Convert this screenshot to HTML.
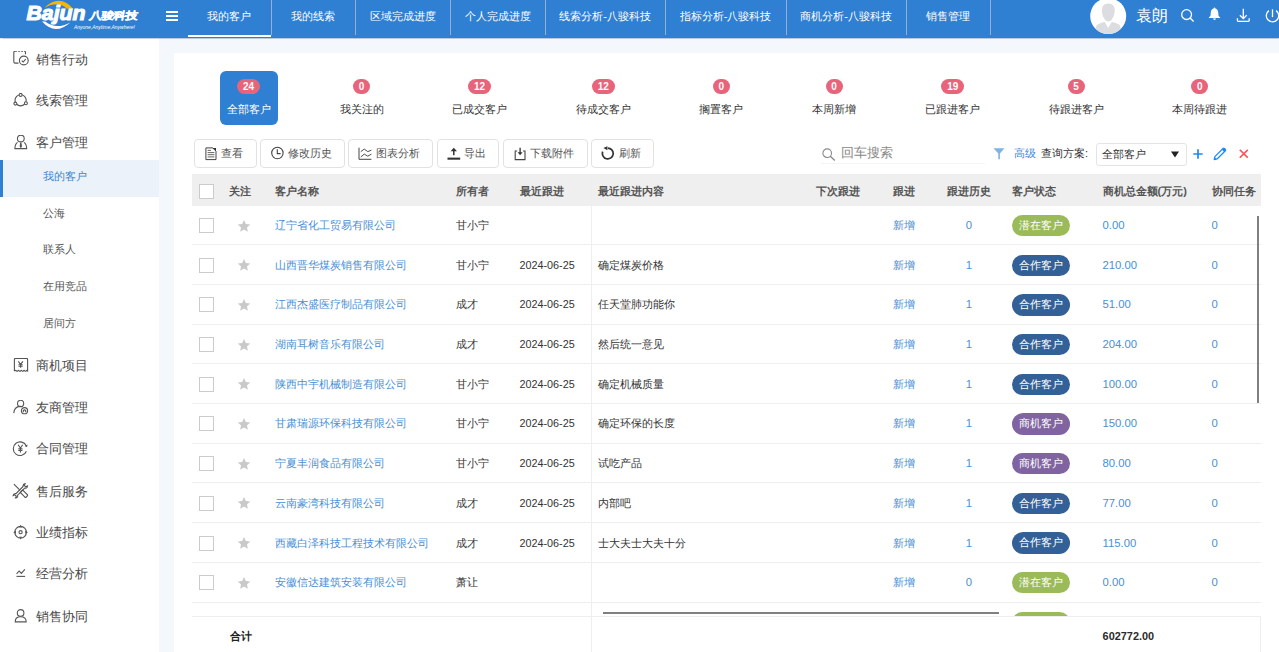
<!DOCTYPE html><html><head><meta charset="utf-8"><style>
*{box-sizing:border-box;margin:0;padding:0}
html,body{width:1279px;height:652px;overflow:hidden}
body{position:relative;background:#f4f7fb;font-family:"Liberation Sans",sans-serif;color:#333;font-size:11px}
.A{position:absolute;white-space:nowrap}
#hdr{position:absolute;left:0;top:0;width:1279px;height:38px;background:#2f80d3;box-shadow:0 0.5px 1px rgba(0,60,140,.25);z-index:5}
.nav{position:absolute;top:0;height:36px;line-height:32px;text-align:center;color:#fff;font-size:11px}
.sep{position:absolute;top:0;width:1px;height:35px;background:#94b0cc}
#side{position:absolute;left:0;top:38px;width:159px;height:614px;background:#fff}
.mi{position:absolute;left:35.6px;height:20px;line-height:20px;font-size:12.8px;color:#4a4a4a;white-space:nowrap}
.si{position:absolute;left:42.6px;height:20px;line-height:20px;font-size:11.2px;color:#555;white-space:nowrap}
#card{position:absolute;left:174px;top:53px;width:1120px;height:620px;background:#fff}
.tl{position:absolute;height:16px;line-height:16px;font-size:11px;color:#333;white-space:nowrap;text-align:center}
.badge{position:absolute;top:79px;height:15px;line-height:15px;border-radius:8px;background:#e8647a;color:#fff;font-weight:bold;font-size:10px;text-align:center;font-family:"Liberation Sans",sans-serif}
.btn{position:absolute;top:139px;height:28.5px;border:1px solid #e2e2e2;border-radius:4px;background:#fff}
.bt{position:absolute;top:144px;height:18px;line-height:18px;color:#555;font-size:11px;white-space:nowrap}
.th{position:absolute;top:181.5px;height:18px;line-height:18px;font-weight:bold;font-size:11px;color:#555;white-space:nowrap}
.cb{position:absolute;width:15px;height:15px;border:1px solid #cbcbcb;border-radius:0;background:#fff}
.rl{position:absolute;left:192px;width:1069px;height:1px;background:#eeeeee}
.td{position:absolute;height:18px;line-height:18px;font-size:11px;color:#333;white-space:nowrap}
.lk{color:#4a8fd6}
.pill{position:absolute;left:1012px;width:58px;height:21.5px;line-height:21.5px;border-radius:11px;color:#fff;font-size:11.2px;text-indent:-1px;text-align:center;white-space:nowrap}
.g{background:#9bbb59}.b{background:#336096}.p{background:#8064a2}
</style></head><body>
<div id="hdr">
<svg class="A" style="left:0;top:0" width="150" height="36" viewBox="0 0 150 36"><path d="M44.4 7.7 Q59.5 -7 73.5 9 L66.5 8.4 Q58.5 0.5 44.4 7.7Z" fill="#f7b500"/><path d="M42 21.6 Q55 36 70.4 22.4 Q56 30 45.2 21.6Z" fill="#fff"/><text x="26.5" y="20" font-family="Liberation Sans" font-weight="bold" font-style="italic" font-size="20" fill="#fff" stroke="#fff" stroke-width="1.1" textLength="59" lengthAdjust="spacingAndGlyphs">Bajun</text><text transform="translate(88.6,19.1) skewX(-10)" x="0" y="0" font-weight="bold" font-size="10.2" fill="#fff" stroke="#fff" stroke-width="0.3" textLength="48.5" lengthAdjust="spacingAndGlyphs">八骏科技</text><text x="74" y="28.6" font-family="Liberation Sans" font-style="italic" font-size="4.8" fill="#fff" textLength="61" lengthAdjust="spacingAndGlyphs">Anyone,Anytime,Anywhere!</text></svg>
<div class="A" style="left:166px;top:11px;width:11.6px;height:1.7px;background:#fff"></div>
<div class="A" style="left:166px;top:15.2px;width:11.6px;height:1.7px;background:#fff"></div>
<div class="A" style="left:166px;top:19.4px;width:11.6px;height:1.7px;background:#fff"></div>
<div class="nav" style="left:187px;width:84px">我的客户</div>
<div class="sep" style="left:271px"></div>
<div class="nav" style="left:271px;width:84px">我的线索</div>
<div class="sep" style="left:355px"></div>
<div class="nav" style="left:355px;width:95px">区域完成进度</div>
<div class="sep" style="left:450px"></div>
<div class="nav" style="left:450px;width:95px">个人完成进度</div>
<div class="sep" style="left:545px"></div>
<div class="nav" style="left:545px;width:120px">线索分析-八骏科技</div>
<div class="sep" style="left:665px"></div>
<div class="nav" style="left:665px;width:121px">指标分析-八骏科技</div>
<div class="sep" style="left:786px"></div>
<div class="nav" style="left:786px;width:120px">商机分析-八骏科技</div>
<div class="sep" style="left:906px"></div>
<div class="nav" style="left:906px;width:84px">销售管理</div>
<div class="sep" style="left:990px"></div>
<div class="A" style="left:188px;top:34.5px;width:83px;height:2px;background:#fff"></div>
<svg class="A" style="left:1090px;top:-2.4px" width="37" height="37" viewBox="0 0 37 37"><defs><clipPath id="cc"><circle cx="18.2" cy="18.1" r="18"/></clipPath></defs><circle cx="18.2" cy="18.1" r="18" fill="#fff"/><g clip-path="url(#cc)" fill="#dcdde1"><path d="M18.3 5.5 C23 5.5 24.7 8.5 24.7 12.5 C24.7 18 21.5 23.6 18.3 23.6 C15 23.6 11.9 18 11.9 12.5 C11.9 8.5 13.6 5.5 18.3 5.5Z"/><path d="M4 38 L6.5 27.5 Q9 25 14.8 24 L18.2 30 L21.8 24 Q27.5 25 30 27.5 L32.5 38Z"/></g></svg>
<div class="A" style="left:1136px;top:6px;font-size:15.5px;line-height:20px;color:#fff">袁朗</div>
<svg class="A" style="left:1180px;top:9px" width="15" height="14" viewBox="0 0 15 14"><circle cx="6.6" cy="5.6" r="4.9" fill="none" stroke="#fff" stroke-width="1.3"/><path d="M10.1 9.1 L13.6 12.6" stroke="#fff" stroke-width="1.4"/></svg>
<svg class="A" style="left:1208px;top:7px" width="13" height="14" viewBox="0 0 13 14"><path d="M6.5 0.6 Q7.2 0.6 7.3 1.5 Q10.2 2.3 10.3 6.2 L10.5 8.8 Q10.8 9.5 12.2 10.2 Q12.4 10.9 11.6 10.9 L1.4 10.9 Q0.6 10.9 0.8 10.2 Q2.2 9.5 2.5 8.8 L2.7 6.2 Q2.8 2.3 5.7 1.5 Q5.8 0.6 6.5 0.6Z" fill="#fff"/><path d="M5 11.6 H8 Q7.8 13 6.5 13 Q5.2 13 5 11.6Z" fill="#fff"/></svg>
<svg class="A" style="left:1236px;top:8px" width="15" height="15" viewBox="0 0 15 15"><path d="M7.3 0.8 V10.6 M3.9 7.2 L7.3 10.6 L10.7 7.2" fill="none" stroke="#fff" stroke-width="1.3"/><path d="M1.4 10.2 V12.6 Q1.4 13.4 2.2 13.4 H12.4 Q13.2 13.4 13.2 12.6 V10.2" fill="none" stroke="#fff" stroke-width="1.3"/></svg>
<svg class="A" style="left:1264px;top:8px" width="16" height="15" viewBox="0 0 16 15"><path d="M4.9 2.6 A6.2 6.2 0 1 0 12.1 2.6" fill="none" stroke="#fff" stroke-width="1.3"/><path d="M8.5 1.3 V9.1" stroke="#fff" stroke-width="1.3"/></svg>
</div>
<div id="side"></div>
<div class="mi" style="top:49.7px">销售行动</div>
<div class="mi" style="top:91.4px">线索管理</div>
<div class="mi" style="top:133.1px">客户管理</div>
<div class="mi" style="top:356.2px">商机项目</div>
<div class="mi" style="top:398.1px">友商管理</div>
<div class="mi" style="top:439.4px">合同管理</div>
<div class="mi" style="top:481.6px">售后服务</div>
<div class="mi" style="top:523.0px">业绩指标</div>
<div class="mi" style="top:564.4px">经营分析</div>
<div class="mi" style="top:606.9px">销售协同</div>
<div class="A" style="left:0;top:160px;width:159px;height:37px;background:#ebf2fa"></div>
<div class="A" style="left:0;top:160px;width:3px;height:37px;background:#2f80d3"></div>
<div class="si" style="color:#3a85d0;top:166.4px">我的客户</div>
<div class="si" style="top:203.3px">公海</div>
<div class="si" style="top:238.9px">联系人</div>
<div class="si" style="top:275.7px">在用竞品</div>
<div class="si" style="top:312.5px">居间方</div>
<svg class="A" style="left:12px;top:51.3px" width="17" height="16" viewBox="0 0 16 16"><path d="M6 12.1 H2.6 Q1.3 12.1 1.3 10.8 V1.6 Q1.3 0.3 2.6 0.3 H11.7 Q13 0.3 13 1.6 V3.3" stroke="#555" stroke-width="1.1" fill="none" stroke-dasharray="18.3 1 2 1 2 1 40"/><circle cx="11.3" cy="9.5" r="4.4" stroke="#555" stroke-width="1.1" fill="none"/><path d="M9.2 9.6 L10.7 11 L13.2 8.2" stroke="#555" stroke-width="1.1" fill="none"/></svg>
<svg class="A" style="left:12px;top:93.0px" width="17" height="16" viewBox="0 0 16 16"><circle cx="8.1" cy="7.3" r="5.6" stroke="#555" stroke-width="1.1" fill="none"/><circle cx="8.1" cy="1.9" r="1.5" fill="#fff" stroke="#555" stroke-width="1.1" fill="none"/><circle cx="2.9" cy="10.6" r="1.5" fill="#fff" stroke="#555" stroke-width="1.1" fill="none"/><circle cx="13.4" cy="10.3" r="1.5" fill="#fff" stroke="#555" stroke-width="1.1" fill="none"/></svg>
<svg class="A" style="left:12px;top:134.7px" width="17" height="16" viewBox="0 0 16 16"><circle cx="8.3" cy="3.5" r="3.4" stroke="#555" stroke-width="1.1" fill="none"/><path d="M5 7.4 Q2.5 9 2.4 13.6 H14.2 Q14 9 11.6 7.4" stroke="#555" stroke-width="1.1" fill="none"/><path d="M8.3 7.6 L7.7 11.2 L8.3 12.2 L8.9 11.2Z" fill="#555" stroke="#555" stroke-width="1.1" fill="none" stroke-width="0.6"/></svg>
<svg class="A" style="left:12px;top:357.8px" width="17" height="16" viewBox="0 0 16 16"><path d="M1.9 12.8 V1.5 Q1.9 0.4 3 0.4 H14 Q15.1 0.4 15.1 1.5 V12.8 Q14.4 12 13.7 12.8 Q13 13.7 12.3 12.8 Q11.6 12 10.9 12.8 Q10.2 13.7 9.5 12.8 Q8.8 12 8.1 12.8 Q7.4 13.7 6.7 12.8 Q6 12 5.3 12.8 Q4.6 13.7 3.9 12.8 Q3.2 12 2.5 12.8Z" stroke="#555" stroke-width="1.1" fill="none"/><path d="M5.8 3.3 L8.1 6.3 L10.4 3.3 M8.1 6.3 V9.8 M6 6.8 H10.2 M6 8.3 H10.2" stroke="#555" stroke-width="1.1" fill="none" stroke-width="1.2"/></svg>
<svg class="A" style="left:12px;top:399.7px" width="17" height="16" viewBox="0 0 16 16"><circle cx="8.1" cy="3.4" r="3.1" stroke="#555" stroke-width="1.1" fill="none"/><path d="M1.3 13.1 Q1.8 6.6 7.5 6.4 Q9.5 6.4 10.3 6.8" stroke="#555" stroke-width="1.1" fill="none"/><circle cx="12" cy="10.7" r="3.1" stroke="#555" stroke-width="1.1" fill="none"/><path d="M10.8 12.3 V10.6 Q12 9.2 13.2 10.6 V12.3" stroke="#555" stroke-width="1.1" fill="none" stroke-width="0.8"/></svg>
<svg class="A" style="left:12px;top:441.0px" width="17" height="16" viewBox="0 0 16 16"><path d="M13.9 5.2 A6.8 6.8 0 1 0 13.9 10.2" stroke="#555" stroke-width="1.1" fill="none"/><path d="M12.3 5 L14.6 6.2 L15 3.6Z" fill="#555"/><path d="M5.6 3.8 L7.9 7 L10.2 3.8 M7.9 7 V11.6 M5.8 7.8 H10 M5.8 9.4 H10" stroke="#555" stroke-width="1.1" fill="none" stroke-width="1.2"/></svg>
<svg class="A" style="left:12px;top:483.2px" width="17" height="16" viewBox="0 0 16 16"><path d="M1.4 1.2 L7.6 7.4" stroke="#555" stroke-width="1.1" fill="none" stroke-width="1.3"/><path d="M9 8.2 L10.2 7 L15 11.8 Q15.3 12.4 14.8 13 L13.6 14.2 Q13 14.6 12.4 14.2 L7.8 9.4Z" stroke="#555" stroke-width="1.1" fill="none" stroke-width="0.9"/><path d="M10.6 3.5 Q10.2 1 12.6 0.6 L11.8 2.4 L13.2 3.8 L15 3 Q14.8 5.6 12.2 5.1 L5.1 12.2 Q5.6 14.8 3 15 L3.8 13.2 L2.4 11.8 L0.6 12.6 Q1 10.2 3.5 10.6Z" stroke="#555" stroke-width="1.1" fill="none" stroke-width="0.9"/></svg>
<svg class="A" style="left:12px;top:524.6px" width="17" height="16" viewBox="0 0 16 16"><circle cx="8.1" cy="7.2" r="5.8" stroke="#555" stroke-width="1.1" fill="none" stroke-width="1.3"/><circle cx="8.1" cy="7.2" r="1.6" stroke="#555" stroke-width="1.1" fill="none" stroke-width="1.3"/><path d="M8.1 -0.2 L9.6 2.6 H6.6Z M8.1 14.6 L9.6 11.8 H6.6Z M0.7 7.2 L3.5 5.7 V8.7Z M15.5 7.2 L12.7 5.7 V8.7Z" fill="#555"/></svg>
<svg class="A" style="left:12px;top:566.0px" width="17" height="16" viewBox="0 0 16 16"><path d="M4.1 7.8 L6.6 5 L8.8 7.4 L12.4 3.4" stroke="#555" stroke-width="1.1" fill="none" stroke-width="1.2"/><path d="M4 10.4 H12.6" stroke="#555" stroke-width="1.1" fill="none" stroke-width="1.4"/></svg>
<svg class="A" style="left:12px;top:608.5px" width="17" height="16" viewBox="0 0 16 16"><circle cx="8.1" cy="3.9" r="3.3" stroke="#555" stroke-width="1.1" fill="none"/><path d="M2.7 12.9 Q2.7 7.7 8.1 7.7 Q13.7 7.7 13.7 12.9 Z" stroke="#555" stroke-width="1.1" fill="none"/></svg>
<div id="card"></div>
<div class="A" style="left:220px;top:71px;width:58px;height:54px;background:#2f80d3;border-radius:6px"></div>
<div class="tl" style="color:#fff;left:208.5px;width:80px;top:101px">全部客户</div>
<div class="badge" style="left:237.0px;width:23px">24</div>
<div class="tl" style="left:321.6px;width:80px;top:101px">我关注的</div>
<div class="badge" style="left:353.1px;width:17px">0</div>
<div class="tl" style="left:439.6px;width:80px;top:101px">已成交客户</div>
<div class="badge" style="left:468.1px;width:23px">12</div>
<div class="tl" style="left:563.2px;width:80px;top:101px">待成交客户</div>
<div class="badge" style="left:591.7px;width:23px">12</div>
<div class="tl" style="left:681.4px;width:80px;top:101px">搁置客户</div>
<div class="badge" style="left:712.9px;width:17px">0</div>
<div class="tl" style="left:794.0px;width:80px;top:101px">本周新增</div>
<div class="badge" style="left:825.5px;width:17px">0</div>
<div class="tl" style="left:912.7px;width:80px;top:101px">已跟进客户</div>
<div class="badge" style="left:941.2px;width:23px">19</div>
<div class="tl" style="left:1036.0px;width:80px;top:101px">待跟进客户</div>
<div class="badge" style="left:1067.5px;width:17px">5</div>
<div class="tl" style="left:1159.7px;width:80px;top:101px">本周待跟进</div>
<div class="badge" style="left:1191.2px;width:17px">0</div>
<div class="btn" style="left:194px;width:63px"></div>
<div class="btn" style="left:260px;width:85px"></div>
<div class="btn" style="left:348px;width:85px"></div>
<div class="btn" style="left:436.5px;width:62.5px"></div>
<div class="btn" style="left:503px;width:85px"></div>
<div class="btn" style="left:591px;width:63px"></div>
<div class="bt" style="left:221.0px">查看</div>
<div class="bt" style="left:287.7px">修改历史</div>
<div class="bt" style="left:375.5px">图表分析</div>
<div class="bt" style="left:464.1px">导出</div>
<div class="bt" style="left:530.1px">下载附件</div>
<div class="bt" style="left:618.5px">刷新</div>
<svg class="A" style="left:205px;top:146.5px" width="12" height="14" viewBox="0 0 12 14"><path d="M0.9 0.9 H7.8 L11 4.1 V12.6 H0.9Z" fill="none" stroke="#444" stroke-width="1"/><path d="M7.6 0.9 L11 4.3 V0.9Z" fill="#333"/><path d="M2.6 3.4 H6 M2.6 5.6 H9.4 M2.6 7.7 H9.4 M2.6 9.9 H9.4" stroke="#555" stroke-width="0.9"/></svg>
<svg class="A" style="left:269.5px;top:146px" width="15" height="15" viewBox="0 0 15 15"><circle cx="7.4" cy="7" r="5.7" fill="none" stroke="#444" stroke-width="1.1"/><path d="M7.3 3.2 V7.6 H10.6" fill="none" stroke="#444" stroke-width="1.1"/></svg>
<svg class="A" style="left:358px;top:146.5px" width="14" height="14" viewBox="0 0 14 14"><path d="M1 0.7 V12.3 H13.4" fill="none" stroke="#444" stroke-width="1"/><path d="M2.8 4.6 L6.3 2.1 L9.8 4.6 L13.4 3.2 M2.8 9.9 L6.3 7.1 L9.8 9.2 L13.4 7.1" fill="none" stroke="#444" stroke-width="0.95"/></svg>
<svg class="A" style="left:446.5px;top:146.5px" width="14" height="14" viewBox="0 0 14 14"><path d="M6.8 0.7 L10 4.2 H3.6Z" fill="#333"/><rect x="6.05" y="4" width="1.5" height="4.2" fill="#333"/><rect x="0.5" y="10.6" width="12.7" height="2.1" fill="#333"/></svg>
<svg class="A" style="left:513.5px;top:146.5px" width="13" height="14" viewBox="0 0 13 14"><path d="M3.2 4 H1.2 V12.6 H11 V4 H9" fill="none" stroke="#444" stroke-width="1.1"/><path d="M6.1 0.8 V6.5" stroke="#333" stroke-width="1.3"/><path d="M3.6 5.2 H8.6 L6.1 8.2Z" fill="#333"/></svg>
<svg class="A" style="left:601px;top:146px" width="14" height="15" viewBox="0 0 14 15"><path d="M1.73 5.65 A5.4 5.4 0 1 0 6.8 2.1" fill="none" stroke="#333" stroke-width="1.7"/><path d="M2.4 2.1 L6.4 0.2 L6.4 4.2Z" fill="#333"/></svg>
<svg class="A" style="left:821.5px;top:147.5px" width="14" height="13" viewBox="0 0 14 13"><circle cx="5.2" cy="5.2" r="4.3" fill="none" stroke="#888" stroke-width="1.1"/><path d="M8.3 8.3 L12.8 12.5" stroke="#888" stroke-width="1.3"/></svg>
<div class="A" style="left:841px;top:144px;font-size:12.5px;line-height:18px;color:#888">回车搜索</div>
<div class="A" style="left:821px;top:163px;width:164px;height:1px;background:#f4f5f7"></div>
<svg class="A" style="left:992.5px;top:148px" width="12" height="12" viewBox="0 0 12 12"><path d="M0.5 0.3 H11.5 L6.9 5.5 V11.2 H5.3 V5.5Z" fill="#7fb2e5"/></svg>
<div class="A" style="left:1014px;top:144px;font-size:11px;line-height:18px;color:#3f88d4">高级</div>
<div class="A" style="left:1041px;top:144px;font-size:11px;line-height:18px;color:#333">查询方案:</div>
<div class="A" style="left:1095.5px;top:143px;width:91px;height:22.5px;border:1px solid #e4e4e4;border-radius:3px;background:#fff"></div>
<div class="A" style="left:1102px;top:145px;font-size:11px;line-height:18px;color:#333">全部客户</div>
<svg class="A" style="left:1170.5px;top:150.5px" width="8" height="7" viewBox="0 0 8 7"><path d="M0 0.5 H8 L4 6.5Z" fill="#222"/></svg>
<svg class="A" style="left:1192.5px;top:148.5px" width="10" height="10" viewBox="0 0 10 10"><path d="M5 0.3 V9.7 M0.3 5 H9.7" stroke="#1a8af5" stroke-width="1.7"/></svg>
<svg class="A" style="left:1213px;top:147px" width="14" height="14" viewBox="0 0 14 14"><path d="M1.2 12.6 L1.84 9.7 L10.32 1.22 L12.58 3.48 L4.1 11.96Z" fill="none" stroke="#1a8af5" stroke-width="1.2" stroke-linejoin="round"/><path d="M8.9 2.6 L10.5 1 Q11.2 0.4 11.9 1 L12.9 2 Q13.5 2.7 12.9 3.4 L11.2 4.9Z" fill="#1a8af5"/><path d="M1.2 12.6 L1.7 10.3 L3.5 12.1Z" fill="#1a8af5"/></svg>
<svg class="A" style="left:1238.5px;top:149px" width="9.5" height="9.5" viewBox="0 0 10 10"><path d="M0.8 0.8 L9.2 9.2 M9.2 0.8 L0.8 9.2" stroke="#fa5555" stroke-width="1.7"/></svg>
<div class="A" style="left:192px;top:174px;width:1069px;height:32px;background:#efefef"></div>
<div class="cb" style="left:199px;top:184px"></div>
<div class="th" style="left:229.2px">关注</div>
<div class="th" style="left:274.5px">客户名称</div>
<div class="th" style="left:456.2px">所有者</div>
<div class="th" style="left:519.5px">最近跟进</div>
<div class="th" style="left:598.1px">最近跟进内容</div>
<div class="th" style="left:815.9px">下次跟进</div>
<div class="th" style="left:893.3px">跟进</div>
<div class="th" style="left:946.8px">跟进历史</div>
<div class="th" style="left:1011.8px">客户状态</div>
<div class="th" style="left:1102.5px">商机总金额(万元)</div>
<div class="th" style="left:1211.5px">协同任务</div>
<div class="rl" style="top:244.47px"></div>
<div class="cb" style="left:199px;top:218.14px"></div>
<svg class="A" style="left:237px;top:218.64px" width="14" height="14" viewBox="0 0 24 24"><path d="M12 1.5 L15.1 8.6 L22.8 9.3 L17 14.4 L18.7 22 L12 18 L5.3 22 L7 14.4 L1.2 9.3 L8.9 8.6Z" fill="#c9c9c9"/></svg>
<div class="td lk" style="left:274.5px;top:216.14px">辽宁省化工贸易有限公司</div>
<div class="td" style="left:456.2px;top:216.14px">甘小宁</div>
<div class="td lk" style="left:893.3px;top:216.14px">新增</div>
<div class="td lk" style="left:949px;width:40px;text-align:center;top:216.14px;font-size:11.3px">0</div>
<div class="pill g" style="top:214.84px">潜在客户</div>
<div class="td lk" style="left:1102.5px;top:216.14px;font-size:11.3px">0.00</div>
<div class="td lk" style="left:1211.5px;top:216.14px;font-size:11.3px">0</div>
<div class="rl" style="top:284.14px"></div>
<div class="cb" style="left:199px;top:257.81px"></div>
<svg class="A" style="left:237px;top:258.31px" width="14" height="14" viewBox="0 0 24 24"><path d="M12 1.5 L15.1 8.6 L22.8 9.3 L17 14.4 L18.7 22 L12 18 L5.3 22 L7 14.4 L1.2 9.3 L8.9 8.6Z" fill="#c9c9c9"/></svg>
<div class="td lk" style="left:274.5px;top:255.81px">山西晋华煤炭销售有限公司</div>
<div class="td" style="left:456.2px;top:255.81px">甘小宁</div>
<div class="td" style="left:519.5px;top:255.81px;font-size:10.8px">2024-06-25</div>
<div class="td" style="left:598.1px;top:255.81px">确定煤炭价格</div>
<div class="td lk" style="left:893.3px;top:255.81px">新增</div>
<div class="td lk" style="left:949px;width:40px;text-align:center;top:255.81px;font-size:11.3px">1</div>
<div class="pill b" style="top:254.50px">合作客户</div>
<div class="td lk" style="left:1102.5px;top:255.81px;font-size:11.3px">210.00</div>
<div class="td lk" style="left:1211.5px;top:255.81px;font-size:11.3px">0</div>
<div class="rl" style="top:323.81px"></div>
<div class="cb" style="left:199px;top:297.47px"></div>
<svg class="A" style="left:237px;top:297.97px" width="14" height="14" viewBox="0 0 24 24"><path d="M12 1.5 L15.1 8.6 L22.8 9.3 L17 14.4 L18.7 22 L12 18 L5.3 22 L7 14.4 L1.2 9.3 L8.9 8.6Z" fill="#c9c9c9"/></svg>
<div class="td lk" style="left:274.5px;top:295.47px">江西杰盛医疗制品有限公司</div>
<div class="td" style="left:456.2px;top:295.47px">成才</div>
<div class="td" style="left:519.5px;top:295.47px;font-size:10.8px">2024-06-25</div>
<div class="td" style="left:598.1px;top:295.47px">任天堂肺功能你</div>
<div class="td lk" style="left:893.3px;top:295.47px">新增</div>
<div class="td lk" style="left:949px;width:40px;text-align:center;top:295.47px;font-size:11.3px">1</div>
<div class="pill b" style="top:294.17px">合作客户</div>
<div class="td lk" style="left:1102.5px;top:295.47px;font-size:11.3px">51.00</div>
<div class="td lk" style="left:1211.5px;top:295.47px;font-size:11.3px">0</div>
<div class="rl" style="top:363.48px"></div>
<div class="cb" style="left:199px;top:337.14px"></div>
<svg class="A" style="left:237px;top:337.64px" width="14" height="14" viewBox="0 0 24 24"><path d="M12 1.5 L15.1 8.6 L22.8 9.3 L17 14.4 L18.7 22 L12 18 L5.3 22 L7 14.4 L1.2 9.3 L8.9 8.6Z" fill="#c9c9c9"/></svg>
<div class="td lk" style="left:274.5px;top:335.14px">湖南耳树音乐有限公司</div>
<div class="td" style="left:456.2px;top:335.14px">成才</div>
<div class="td" style="left:519.5px;top:335.14px;font-size:10.8px">2024-06-25</div>
<div class="td" style="left:598.1px;top:335.14px">然后统一意见</div>
<div class="td lk" style="left:893.3px;top:335.14px">新增</div>
<div class="td lk" style="left:949px;width:40px;text-align:center;top:335.14px;font-size:11.3px">1</div>
<div class="pill b" style="top:333.84px">合作客户</div>
<div class="td lk" style="left:1102.5px;top:335.14px;font-size:11.3px">204.00</div>
<div class="td lk" style="left:1211.5px;top:335.14px;font-size:11.3px">0</div>
<div class="rl" style="top:403.15px"></div>
<div class="cb" style="left:199px;top:376.81px"></div>
<svg class="A" style="left:237px;top:377.31px" width="14" height="14" viewBox="0 0 24 24"><path d="M12 1.5 L15.1 8.6 L22.8 9.3 L17 14.4 L18.7 22 L12 18 L5.3 22 L7 14.4 L1.2 9.3 L8.9 8.6Z" fill="#c9c9c9"/></svg>
<div class="td lk" style="left:274.5px;top:374.81px">陕西中宇机械制造有限公司</div>
<div class="td" style="left:456.2px;top:374.81px">甘小宁</div>
<div class="td" style="left:519.5px;top:374.81px;font-size:10.8px">2024-06-25</div>
<div class="td" style="left:598.1px;top:374.81px">确定机械质量</div>
<div class="td lk" style="left:893.3px;top:374.81px">新增</div>
<div class="td lk" style="left:949px;width:40px;text-align:center;top:374.81px;font-size:11.3px">1</div>
<div class="pill b" style="top:373.51px">合作客户</div>
<div class="td lk" style="left:1102.5px;top:374.81px;font-size:11.3px">100.00</div>
<div class="td lk" style="left:1211.5px;top:374.81px;font-size:11.3px">0</div>
<div class="rl" style="top:442.82px"></div>
<div class="cb" style="left:199px;top:416.49px"></div>
<svg class="A" style="left:237px;top:416.99px" width="14" height="14" viewBox="0 0 24 24"><path d="M12 1.5 L15.1 8.6 L22.8 9.3 L17 14.4 L18.7 22 L12 18 L5.3 22 L7 14.4 L1.2 9.3 L8.9 8.6Z" fill="#c9c9c9"/></svg>
<div class="td lk" style="left:274.5px;top:414.49px">甘肃瑞源环保科技有限公司</div>
<div class="td" style="left:456.2px;top:414.49px">甘小宁</div>
<div class="td" style="left:519.5px;top:414.49px;font-size:10.8px">2024-06-25</div>
<div class="td" style="left:598.1px;top:414.49px">确定环保的长度</div>
<div class="td lk" style="left:893.3px;top:414.49px">新增</div>
<div class="td lk" style="left:949px;width:40px;text-align:center;top:414.49px;font-size:11.3px">1</div>
<div class="pill p" style="top:413.19px">商机客户</div>
<div class="td lk" style="left:1102.5px;top:414.49px;font-size:11.3px">150.00</div>
<div class="td lk" style="left:1211.5px;top:414.49px;font-size:11.3px">0</div>
<div class="rl" style="top:482.49px"></div>
<div class="cb" style="left:199px;top:456.16px"></div>
<svg class="A" style="left:237px;top:456.66px" width="14" height="14" viewBox="0 0 24 24"><path d="M12 1.5 L15.1 8.6 L22.8 9.3 L17 14.4 L18.7 22 L12 18 L5.3 22 L7 14.4 L1.2 9.3 L8.9 8.6Z" fill="#c9c9c9"/></svg>
<div class="td lk" style="left:274.5px;top:454.16px">宁夏丰润食品有限公司</div>
<div class="td" style="left:456.2px;top:454.16px">甘小宁</div>
<div class="td" style="left:519.5px;top:454.16px;font-size:10.8px">2024-06-25</div>
<div class="td" style="left:598.1px;top:454.16px">试吃产品</div>
<div class="td lk" style="left:893.3px;top:454.16px">新增</div>
<div class="td lk" style="left:949px;width:40px;text-align:center;top:454.16px;font-size:11.3px">1</div>
<div class="pill p" style="top:452.86px">商机客户</div>
<div class="td lk" style="left:1102.5px;top:454.16px;font-size:11.3px">80.00</div>
<div class="td lk" style="left:1211.5px;top:454.16px;font-size:11.3px">0</div>
<div class="rl" style="top:522.16px"></div>
<div class="cb" style="left:199px;top:495.82px"></div>
<svg class="A" style="left:237px;top:496.32px" width="14" height="14" viewBox="0 0 24 24"><path d="M12 1.5 L15.1 8.6 L22.8 9.3 L17 14.4 L18.7 22 L12 18 L5.3 22 L7 14.4 L1.2 9.3 L8.9 8.6Z" fill="#c9c9c9"/></svg>
<div class="td lk" style="left:274.5px;top:493.82px">云南豪湾科技有限公司</div>
<div class="td" style="left:456.2px;top:493.82px">成才</div>
<div class="td" style="left:519.5px;top:493.82px;font-size:10.8px">2024-06-25</div>
<div class="td" style="left:598.1px;top:493.82px">内部吧</div>
<div class="td lk" style="left:893.3px;top:493.82px">新增</div>
<div class="td lk" style="left:949px;width:40px;text-align:center;top:493.82px;font-size:11.3px">1</div>
<div class="pill b" style="top:492.52px">合作客户</div>
<div class="td lk" style="left:1102.5px;top:493.82px;font-size:11.3px">77.00</div>
<div class="td lk" style="left:1211.5px;top:493.82px;font-size:11.3px">0</div>
<div class="rl" style="top:561.83px"></div>
<div class="cb" style="left:199px;top:535.50px"></div>
<svg class="A" style="left:237px;top:536.00px" width="14" height="14" viewBox="0 0 24 24"><path d="M12 1.5 L15.1 8.6 L22.8 9.3 L17 14.4 L18.7 22 L12 18 L5.3 22 L7 14.4 L1.2 9.3 L8.9 8.6Z" fill="#c9c9c9"/></svg>
<div class="td lk" style="left:274.5px;top:533.50px">西藏白泽科技工程技术有限公司</div>
<div class="td" style="left:456.2px;top:533.50px">成才</div>
<div class="td" style="left:519.5px;top:533.50px;font-size:10.8px">2024-06-25</div>
<div class="td" style="left:598.1px;top:533.50px">士大夫士大夫十分</div>
<div class="td lk" style="left:893.3px;top:533.50px">新增</div>
<div class="td lk" style="left:949px;width:40px;text-align:center;top:533.50px;font-size:11.3px">1</div>
<div class="pill b" style="top:532.20px">合作客户</div>
<div class="td lk" style="left:1102.5px;top:533.50px;font-size:11.3px">115.00</div>
<div class="td lk" style="left:1211.5px;top:533.50px;font-size:11.3px">0</div>
<div class="rl" style="top:601.50px"></div>
<div class="cb" style="left:199px;top:575.17px"></div>
<svg class="A" style="left:237px;top:575.67px" width="14" height="14" viewBox="0 0 24 24"><path d="M12 1.5 L15.1 8.6 L22.8 9.3 L17 14.4 L18.7 22 L12 18 L5.3 22 L7 14.4 L1.2 9.3 L8.9 8.6Z" fill="#c9c9c9"/></svg>
<div class="td lk" style="left:274.5px;top:573.17px">安徽信达建筑安装有限公司</div>
<div class="td" style="left:456.2px;top:573.17px">萧让</div>
<div class="td lk" style="left:893.3px;top:573.17px">新增</div>
<div class="td lk" style="left:949px;width:40px;text-align:center;top:573.17px;font-size:11.3px">0</div>
<div class="pill g" style="top:571.87px">潜在客户</div>
<div class="td lk" style="left:1102.5px;top:573.17px;font-size:11.3px">0.00</div>
<div class="td lk" style="left:1211.5px;top:573.17px;font-size:11.3px">0</div>
<div class="cb" style="left:199px;top:616.04px"></div>
<div class="pill g" style="top:611.54px"></div>
<div class="A" style="left:591px;top:174px;width:1px;height:478px;background:#eeeeee"></div>
<div class="A" style="left:1257px;top:216px;width:2px;height:187px;background:#808080"></div>
<div class="A" style="left:602.5px;top:612px;width:396px;height:2px;background:#808080"></div>
<div class="A" style="left:192px;top:616.3px;width:1069px;height:40px;background:#fff;border-top:1px solid #eeeeee;border-right:1px solid #eeeeee"></div>
<div class="A" style="left:591px;top:616px;width:1px;height:40px;background:#eeeeee"></div>
<div class="A" style="left:229.8px;top:626.8px;font-weight:bold;font-size:10.8px;line-height:18px;color:#222">合计</div>
<div class="A" style="left:1102.6px;top:627px;font-weight:bold;font-size:10.9px;line-height:18px;color:#2a2a2a">602772.00</div>
</body></html>
